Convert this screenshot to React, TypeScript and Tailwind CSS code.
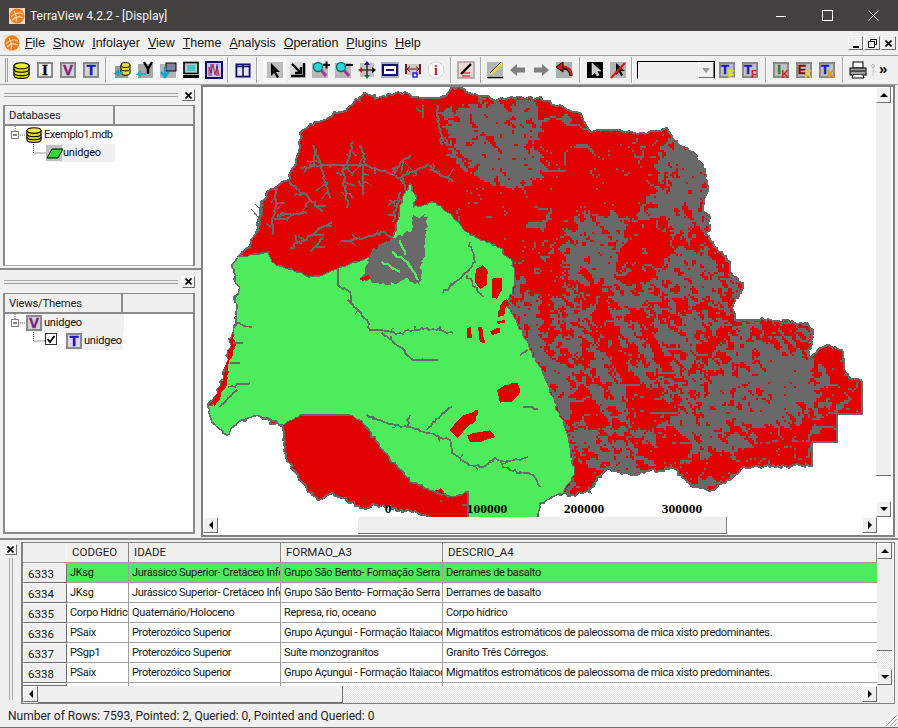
import React from "react";

type P = [number, number];
const RED = "#e00000", GREEN = "#4cec5c", GREY = "#696969";

function rnd2(x: number, y: number) {
  const s = Math.sin(x * 127.1 + y * 311.7) * 43758.5453;
  return s - Math.floor(s);
}
function vnoise(x: number, y: number) {
  const xi = Math.floor(x), yi = Math.floor(y);
  const f = x - xi, g = y - yi;
  const u = f * f * (3 - 2 * f), v = g * g * (3 - 2 * g);
  const a = rnd2(xi, yi), b = rnd2(xi + 1, yi), c = rnd2(xi, yi + 1), d = rnd2(xi + 1, yi + 1);
  return a * (1 - u) * (1 - v) + b * u * (1 - v) + c * (1 - u) * v + d * u * v;
}
function rough(pts: P[], amp = 1.6, step = 3): string {
  const out: P[] = [];
  for (let i = 0; i < pts.length; i++) {
    const a = pts[i], b = pts[(i + 1) % pts.length];
    const dx = b[0] - a[0], dy = b[1] - a[1];
    const len = Math.hypot(dx, dy);
    if (dx === 0 || dy === 0) { out.push(a); continue; }
    const n = Math.max(1, Math.round(len / step));
    for (let k = 0; k < n; k++) {
      const t = k / n;
      const x = a[0] + dx * t, y = a[1] + dy * t;
      const j = k === 0 ? 0 : 1;
      out.push([
        Math.round(x + j * (vnoise(x / 1.7, y / 1.7) - 0.5) * amp * 3),
        Math.round(y + j * (vnoise(x / 1.7 + 9, y / 1.7 + 5) - 0.5) * amp * 3),
      ]);
    }
  }
  return "M" + out.map((p) => p.join(" ")).join("L") + "Z";
}

const outline: P[] = [[232,267],[238,257],[247,248],[255,235],[263,205],[267,192],[280,184],[290,178],[296,160],[303,130],[318,122],[333,115],[348,108],[363,95],[380,97],[400,93],[420,98],[440,98],[447,95],[451,87],[470,93],[490,98],[505,100],[520,97],[537,98],[550,102],[565,108],[580,113],[590,132],[600,130],[620,130],[640,133],[667,128],[673,140],[693,152],[703,165],[708,187],[703,208],[710,218],[707,235],[717,248],[730,262],[730,272],[743,287],[733,305],[735,320],[760,320],[807,323],[813,332],[807,362],[818,350],[827,345],[842,350],[845,375],[862,382],[862,414],[837,414],[837,442],[812,442],[812,466],[743,467],[730,480],[713,490],[700,488],[687,482],[673,468],[650,470],[633,475],[620,472],[607,468],[597,480],[590,492],[573,495],[563,493],[545,500],[540,503],[537,517],[468,530],[413,512],[377,505],[360,508],[333,493],[318,500],[307,490],[287,460],[283,427],[258,415],[238,422],[227,435],[212,422],[208,407],[213,400],[223,380],[233,333],[237,307],[235,302],[240,288]];
const green: P[] = [[232,267],[238,257],[268,252],[272,262],[310,277],[323,275],[340,267],[367,258],[390,250],[402,200],[410,183],[417,198],[413,208],[433,202],[453,217],[470,235],[500,248],[513,262],[515,285],[507,305],[523,333],[547,383],[567,433],[575,473],[563,493],[540,503],[537,520],[468,520],[468,492],[453,497],[435,492],[413,483],[390,460],[363,423],[350,415],[327,415],[300,415],[283,425],[258,415],[238,422],[227,435],[212,422],[208,407],[213,405],[225,375],[233,335],[237,307],[235,302],[240,288]];
const west: P[] = [[233,332],[236,345],[229,363],[227,385],[214,406],[213,400],[223,380]];

function inPoly(x: number, y: number, poly: P[]) {
  let c = false;
  for (let i = 0, j = poly.length - 1; i < poly.length; j = i++) {
    const [xi, yi] = poly[i], [xj, yj] = poly[j];
    if (yi > y !== yj > y && x < ((xj - xi) * (y - yi)) / (yj - yi) + xi) c = !c;
  }
  return c;
}
const blobs: number[][] = [
  [485,128,40,28,0.68],[510,165,32,20,0.7],[470,150,20,18,0.62],[525,120,16,20,0.58],
  [680,172,22,38,0.66],[675,215,34,26,0.6],[690,272,26,28,0.6],[600,120,30,12,0.3],
  [605,250,40,38,0.62],[560,245,20,28,0.46],[655,350,100,95,0.53],
  [600,400,58,74,0.54],[765,385,58,42,0.66],[790,345,26,22,0.5],
  [530,335,14,40,0.66],[556,405,15,50,0.66],[520,300,12,24,0.58],[558,482,15,13,0.7],[690,425,62,32,0.6],[620,460,34,17,0.54],
  [580,320,32,38,0.52],[720,290,18,22,0.5],
];
const redBlobs: P[][] = [
  [[570,135],[600,137],[625,150],[645,185],[640,200],[610,205],[600,215],[578,205]],
  [[627,222],[665,215],[672,245],[650,280],[625,285],[612,275]],
  [[580,285],[600,285],[628,370],[640,378],[625,385],[600,345]],
  [[632,310],[640,310],[675,375],[665,378]],
  [[653,428],[672,425],[692,445],[685,458],[660,465]],
  [[567,395],[585,385],[610,425],[590,430],[575,425]],
  [[623,375],[640,380],[680,412],[645,430],[630,425]],
  [[683,465],[712,460],[713,490],[695,485]],
  [[697,352],[737,305],[735,322],[705,360]],
  [[837,413],[860,388],[862,413]],
  [[813,440],[835,418],[836,441]],
  [[818,358],[830,347],[840,352],[838,365],[825,368]],
  [[578,468],[600,466],[597,480],[588,490],[575,488]],
  [[540,180],[565,185],[566,225],[548,240],[540,230]],
  [[760,325],[800,326],[790,335],[765,335]],
];
function density(x: number, y: number) {
  let d = 0;
  for (const [cx, cy, rx, ry, a] of blobs) {
    const q = ((x - cx) / rx) ** 2 + ((y - cy) / ry) ** 2;
    if (q < 1.5) d = Math.max(d, a * Math.min(1, 1.4 - q * 0.6));
  }
  return d;
}
function greyCells() {
  let s = "";
  for (let y = 86; y < 516; y += 2) {
    let run = -1;
    for (let x = 440; x <= 866; x += 2) {
      let on = false;
      if (inPoly(x, y, outline) && !inPoly(x, y, green)) {
        let d = density(x, y);
        if (redBlobs.some((b) => inPoly(x, y, b))) d = Math.min(d, 0.24);
        if (d > 0.05) {
          const u = (x + y) / 14, v = (x - y) / 5;
          const n = 0.4 * vnoise(u, v) + 0.4 * vnoise(x / 4.2, y / 4.2) + 0.2 * vnoise(x / 1.8, y / 1.8);
          on = n < d;
        }
        const east = x > 560 || y > 270 ? 1 : x > 500 ? 0.45 : 0.25;
        const r = Math.abs(vnoise(x / 15 + 3 + vnoise(x / 9, y / 9) * 1.2, y / 15 + 7) - 0.5);
        if (r < 0.028 * east) on = true;
      }
      if (on && run < 0) run = x;
      if (!on && run >= 0) { s += `M${run} ${y}h${x - run}v2h${run - x}z`; run = -1; }
    }
  }
  return s;
}
const riversRed: P[][] = [
  [[300,168],[327,165],[367,165],[387,172],[400,178],[427,165],[453,182]],
  [[313,145],[322,170],[330,198]],[[343,165],[347,208]],[[363,165],[363,195]],[[353,142],[347,165]],
  [[360,145],[365,165]],[[410,155],[393,172]],[[400,192],[393,222]],[[290,182],[323,212]],
  [[277,215],[307,213]],[[277,188],[272,235]],[[332,222],[290,248]],[[323,238],[310,252]],
  [[437,105],[442,145]],[[423,105],[423,118]],[[400,178],[410,195]],
  [[340,242],[365,238],[385,232],[395,240]],[[262,200],[255,235]],
];
const riversGreen: P[][] = [
  [[348,300],[367,320],[370,330],[382,330],[400,333],[427,328],[453,333]],
  [[382,333],[400,347],[413,360],[438,360]],
  [[367,415],[387,423],[407,427],[427,433],[450,440],[452,453],[467,463],[483,467],[495,458],[510,470],[533,475],[540,487]],
  [[410,415],[407,427]],[[427,430],[443,413],[452,407]],[[500,463],[528,457]],
  [[237,323],[252,327]],[[233,343],[243,343]],[[230,363],[240,363]],[[228,387],[250,383]],[[220,407],[237,390]],
  [[338,268],[338,285],[350,292],[352,305]],[[443,293],[467,272],[475,262],[470,242]],[[467,275],[483,297]],
  [[523,407],[538,409]],[[520,355],[527,350]],[[363,423],[390,460],[413,483],[435,492],[453,497]],
];
function twigs(rs: P[][], every: number, maxLen: number): P[][] {
  const out: P[][] = [];
  rs.forEach((r, ri) => {
    for (let i = 0; i < r.length - 1; i++) {
      const [a, b] = [r[i], r[i + 1]];
      const len = Math.hypot(b[0] - a[0], b[1] - a[1]);
      const n = Math.floor(len / every);
      for (let k = 1; k <= n; k++) {
        const t = k / (n + 1);
        const x = a[0] + (b[0] - a[0]) * t, y = a[1] + (b[1] - a[1]) * t;
        const ang = rnd2(ri + k, i + 3) * Math.PI * 2;
        const l = 3 + rnd2(k, ri) * maxLen;
        out.push([[Math.round(x), Math.round(y)], [Math.round(x + Math.cos(ang) * l), Math.round(y + Math.sin(ang) * l)]]);
      }
    }
  });
  return out;
}
const greenSlits: P[][] = [[[392,252],[408,262],[418,280]],[[400,240],[405,255]],[[382,262],[400,272]]];
const redInGreen: P[][] = [
  [[467,328],[471,327],[472,338],[467,338]],[[478,327],[482,327],[484,338],[486,345],[480,342]],
  [[490,331],[500,328],[500,333],[492,335]],[[497,321],[505,320],[505,323],[498,324]],
  [[498,312],[504,300],[507,300],[504,316],[498,317]],
  [[476,269],[483,265],[488,272],[487,285],[480,289],[475,282]],
  [[492,279],[502,278],[502,290],[497,299],[492,298]],[[501,306],[507,298],[509,306]],
  [[497,390],[504,385],[518,383],[520,392],[512,402],[500,403]],
  [[450,430],[462,416],[478,410],[476,420],[466,428],[458,438]],
  [[467,435],[478,432],[490,430],[495,437],[480,442],[470,442]],
  [[435,490],[440,488],[445,494],[438,494]],
];
const line = (r: P[], amp = 1) => rough(r.concat([...r].reverse().slice(1, -1)), amp, 3);
const MAP = {
  grey: greyCells(),
  out: rough(outline, 1.7),
  green: rough(green, 1.2),
  west: rough(west, 0.8),
  block: rough([[373,248],[410,232],[413,215],[428,217],[425,240],[420,285],[405,278],[385,285],[360,278]], 2),
  red: riversRed.map((r) => line(r, 1.2)).join(""),
  tw: twigs(riversRed, 9, 11).map((r) => line(r, 1)).join(""),
  gr: riversGreen.map((r) => line(r, 1.2)).join(""),
  gt: twigs(riversGreen.slice(0, 3), 14, 5).map((r) => line(r, 0.8)).join(""),
  rg: redInGreen.map((b) => rough(b, 0.7)).join(""),
};

function MapArt() {
  return (
    <svg width={673} height={430} viewBox="203 87 673 430" className="block shrink-0" shapeRendering="crispEdges">
      <rect x={203} y={87} width={673} height={430} fill="#fff" />
      <path d={MAP.out} fill={RED} stroke={GREY} strokeWidth={2} />
      <path d={MAP.grey} fill={GREY} />
      <path d={MAP.red} fill="none" stroke={GREY} strokeWidth={2} />
      <path d={MAP.tw} fill="none" stroke={GREY} strokeWidth={1.4} />
      <path d={MAP.green} fill={GREEN} stroke={GREY} strokeWidth={1.2} />
      <path d={MAP.west} fill={RED} />
      <path d={MAP.block} fill={GREY} />
      {greenSlits.map((r, i) => <path key={i} d={line(r, 1)} fill="none" stroke={GREEN} strokeWidth={2.4} />)}
      <path d="M359 279l9-4 3 3-8 3z" fill={RED} />
      <path d={MAP.rg} fill={RED} />
      <path d={MAP.gr} fill="none" stroke={GREY} strokeWidth={1.5} />
      <path d={MAP.gt} fill="none" stroke={GREY} strokeWidth={1.2} />
      <g fontFamily="'Liberation Serif',serif" fontWeight={700} fontSize={13.5} fill="#000" textAnchor="middle" shapeRendering="auto">
        <text x={388} y={513}>0</text>
        <text x={487} y={513}>100000</text>
        <text x={584} y={513}>200000</text>
        <text x={682} y={513}>300000</text>
      </g>
    </svg>
  );
}

const Arrow = ({ d }: { d: "u" | "d" | "l" | "r" }) => {
  const pts = { u: "4,1 0,5 8,5", d: "0,1 8,1 4,5", l: "5,0 5,8 1,4", r: "1,0 1,8 5,4" }[d];
  const [w, h] = d === "u" || d === "d" ? [8, 6] : [6, 8];
  return <svg width={w} height={h} viewBox={`0 0 ${w} ${h}`}><polygon points={pts} fill="#000" /></svg>;
};
const bevel = "border border-t-white border-l-white border-r-[#6e6e6e] border-b-[#6e6e6e] bg-[#f0f0f0]";
const SB = ({ d, cls = "" }: { d: "u" | "d" | "l" | "r"; cls?: string }) => (
  <div className={`w-[15px] h-[16px] shrink-0 flex items-center justify-center ${bevel} ${cls}`}><Arrow d={d} /></div>
);
const XBtn = ({ cls = "" }: { cls?: string }) => (
  <div className={`w-[13px] h-[12px] flex items-center justify-center ${bevel} ${cls}`}>
    <svg width={7} height={7} viewBox="0 0 7 7"><path d="M0.5 0.5l6 6M6.5 0.5l-6 6" stroke="#000" strokeWidth={1.6} /></svg>
  </div>
);

const Logo = () => (
  <svg width={16} height={16} viewBox="0 0 16 16" className="shrink-0">
    <rect width={16} height={16} fill="#f7dcc0" />
    <circle cx={8} cy={8} r={7.5} fill="#ea7f20" />
    <path d="M2 9c3-4 8-5 12-3M3 12c3-3 7-4 11-2M5 3c2 3 3 7 2 11" stroke="#fbd9b0" strokeWidth={1.2} fill="none" />
  </svg>
);
const Db = ({ s = 16 }: { s?: number }) => (
  <svg width={s} height={s} viewBox="0 0 18 18" className="shrink-0">
    <path d="M1 4v10c0 4.5 16 4.5 16 0V4z" fill="#e0d820" stroke="#000" strokeWidth={1.2} />
    <ellipse cx={9} cy={4} rx={8} ry={3.2} fill="#f0ea40" stroke="#000" strokeWidth={1.2} />
    <path d="M1 7.5c0 4.5 16 4.5 16 0M1 11c0 4.5 16 4.5 16 0" fill="none" stroke="#000" strokeWidth={1.2} />
  </svg>
);
const Letter = ({ c, col, k, kc = "#f0a000", s = 16, bg = "#d4d4d4", serif }: { c: string; col: string; k?: string; kc?: string; s?: number; bg?: string; serif?: boolean }) => (
  <svg width={s} height={s} viewBox="0 0 16 16" className="shrink-0">
    <rect width={16} height={16} fill="#8a8a8a" />
    <rect x={2} y={2} width={12} height={12} fill={bg} />
    <text x={k ? 6 : 8} y={k ? 11.5 : 13} textAnchor="middle" fontFamily={serif ? "'Liberation Serif',serif" : "'Liberation Sans',sans-serif"} fontWeight={900} fontSize={k ? 13 : 15} fill={col} stroke={col} strokeWidth={0.4}>{c}</text>
    {k && <text x={12} y={15.5} textAnchor="middle" fontFamily="'Liberation Sans',sans-serif" fontWeight={700} fontSize={10} fill={kc}>{k}</text>}
  </svg>
);
const Ic = ({ children, w = 18, h = 18 }: { children: React.ReactNode; w?: number; h?: number }) => (
  <svg width={w} height={h} viewBox={`0 0 ${w} ${h}`} className="shrink-0">{children}</svg>
);
const Lens = ({ minus }: { minus?: boolean }) => (
  <Ic>
    <rect x={0} y={2} width={16} height={15} fill="#b8b8b8" />
    <path d="M9 9l5 6" stroke="#a03ca0" strokeWidth={3} />
    <circle cx={6} cy={6} r={4.5} fill="#29d7d7" stroke="#107070" strokeWidth={1.4} />
    <path d={minus ? "M11 4h7" : "M11 4h7M14.5 0.5v7"} stroke="#000" strokeWidth={2} />
  </Ic>
);
const Tb = ({ children, lit }: { children?: React.ReactNode; lit?: boolean }) => (
  <div className={`w-[23px] h-[24px] shrink-0 flex items-center justify-center ${lit ? "bg-[#f7f7f7]" : ""}`}>{children}</div>
);
const Sep = ({ cls }: { cls: string }) => <div className={`w-[2px] h-[26px] shrink-0 border-l border-l-[#a8a8a8] border-r border-r-white ${cls}`} />;

function Toolbar() {
  return (
    <div className="h-[30px] shrink-0 flex items-center border-y border-[#a0a0a0] bg-[#f0f0f0]">
      <div className="w-[3px] h-[24px] ml-[5px] mr-[2px] border-x border-[#a0a0a0] shrink-0" />
      <Tb><Db s={17} /></Tb>
      <Tb><Letter c="I" col="#000" bg="#f4f4f4" serif /></Tb>
      <Tb><Letter c="V" col="#7a1f7a" /></Tb>
      <Tb><Letter c="T" col="#1414c8" /></Tb>
      <Sep cls="ml-[3px] mr-[3px]" />
      <Tb lit><Ic><rect x={2} y={5} width={13} height={12} fill="#9a9a9a" /><path d="M8 4v8c0 3 9 3 9 0V4" fill="#e4dc30" stroke="#000" /><ellipse cx={12.5} cy={4} rx={4.5} ry={2.5} fill="#e4dc30" stroke="#000" /><path d="M8 8c0 2.5 9 2.5 9 0" fill="none" stroke="#000" /><path d="M10 12H3l3-3M3 12l3 3" stroke="#12a8a8" strokeWidth={2} fill="none" /></Ic></Tb>
      <Tb lit><Ic><rect x={2} y={3} width={15} height={14} fill="#a8a8a8" /><path d="M8 1l4 7 4-7M12 8v5" stroke="#000" strokeWidth={2.4} fill="none" /><path d="M10 13H2l3-3M2 13l3 3" stroke="#12b8b8" strokeWidth={2} fill="none" /></Ic></Tb>
      <Tb lit><Ic><rect x={1} y={3} width={16} height={14} fill="#b4b4b4" /><rect x={7} y={2} width={10} height={8} fill="#8080a0" stroke="#000" /><path d="M6 6v9M2 11l4 5 4-5" stroke="#10a8c8" strokeWidth={2.4} fill="none" /></Ic></Tb>
      <Tb lit><Ic><rect x={2} y={1.5} width={14} height={11} fill="#b0c8c8" stroke="#000" strokeWidth={1.6} /><rect x={5} y={4} width={8} height={6} fill="#40c8c8" /><rect x={1} y={14} width={16} height={3} fill="#000" /></Ic></Tb>
      <Tb><Ic><rect x={1} y={1} width={16} height={16} fill="#c8c8ee" stroke="#101060" strokeWidth={2} /><path d="M4 15V6l2 6 2-9 2 11 2-9 2 10" stroke="#d81818" fill="none" /><path d="M6 3v12M12 3v12" stroke="#2020c0" /></Ic></Tb>
      <Sep cls="ml-[2px] mr-[2px]" />
      <Tb><Ic><rect x={1} y={2} width={16} height={15} fill="#a8a8e0" /><rect x={2.5} y={3.5} width={13} height={12} fill="#e8e8e8" stroke="#101070" strokeWidth={1.6} /><path d="M9 3v12M2 5.5h14" stroke="#101070" strokeWidth={1.6} /></Ic></Tb>
      <Sep cls="ml-[2px] mr-[5px]" />
      <Tb lit><Ic><rect x={1} y={1} width={16} height={16} fill="#bdbdbd" /><path d="M5 2v13l3-3 3 5 2-1-3-5h4z" fill="#000" /></Ic></Tb>
      <Tb><Ic><rect x={1} y={1} width={16} height={16} fill="#d8d8d8" /><path d="M3 3l9 9M12 6v6H6" stroke="#000" strokeWidth={2.4} fill="none" /><path d="M15 2v13H2" stroke="#000" strokeWidth={2.4} fill="none" /></Ic></Tb>
      <Tb><Lens /></Tb>
      <Tb><Lens minus /></Tb>
      <Tb><Ic><rect x={2} y={2} width={14} height={14} fill="#c4c4c4" /><path d="M9 0l3 4H6z" fill="#1818b0" /><path d="M9 18l-3-4h6z" fill="#108030" /><path d="M0 9l4-3v6z" fill="#d81818" /><path d="M18 9l-4-3v6z" fill="#000" /><path d="M9 3v12M3 9h12" stroke="#333" strokeWidth={1.6} /></Ic></Tb>
      <Tb><Ic><rect x={0} y={1} width={18} height={16} fill="#a8a8c8" /><rect x={2} y={4} width={14} height={10} fill="#fff" stroke="#101070" strokeWidth={2} /><rect x={5} y={8} width={8} height={2} fill="#101070" /></Ic></Tb>
      <Tb><Ic><rect x={1} y={3} width={16} height={11} fill="#c8c8c8" /><path d="M2 3v10M16 3v10" stroke="#7a1818" strokeWidth={2} /><path d="M3 8h12M6 5.5L3 8l3 2.5M12 5.5L15 8l-3 2.5" stroke="#7a1818" fill="none" /><rect x={9} y={12} width={4} height={4} fill="none" stroke="#1818c8" strokeWidth={1.4} /></Ic></Tb>
      <Tb><Ic><circle cx={9} cy={9} r={8} fill="#fff" stroke="#d4d4d4" /><text x={9} y={14} textAnchor="middle" fontFamily="'Liberation Serif',serif" fontWeight={700} fontSize={14} fill="#c81818">i</text></Ic></Tb>
      <Sep cls="ml-[3px] mr-[2px]" />
      <Tb><Ic><rect x={1} y={1} width={16} height={16} fill="#f0d8d8" stroke="#9a9a9a" strokeWidth={1.4} /><path d="M5 12h8M5 15h8" stroke="#e04040" strokeWidth={1.6} /><path d="M14 3L4 13" stroke="#000" strokeWidth={2.4} /></Ic></Tb>
      <Sep cls="ml-[3px] mr-[1px]" />
      <Tb><Ic><rect x={1} y={1} width={16} height={14} fill="#b4b4b4" /><path d="M16 2L5 13" stroke="#e8e020" strokeWidth={2.6} /><path d="M15 1L4 12" stroke="#3030c0" /><path d="M1 16.5h16" stroke="#000" strokeWidth={1.6} /></Ic></Tb>
      <Tb><Ic><path d="M1 9l7-6v3.5h8v5H8V15z" fill="#808080" /></Ic></Tb>
      <Tb><Ic><path d="M17 9l-7-6v3.5H2v5h8V15z" fill="#808080" /></Ic></Tb>
      <Tb><Ic><rect x={1} y={1} width={16} height={16} fill="#a8b0b0" /><path d="M16 15c0-6-4-9-11-8" fill="none" stroke="#000" strokeWidth={3.4} /><path d="M16 14c0-6-4-9-10-8" fill="none" stroke="#d81818" strokeWidth={2.4} /><path d="M8 1L1 6l7 5z" fill="#d81818" stroke="#000" /></Ic></Tb>
      <Sep cls="ml-[4px] mr-[2px]" />
      <Tb><Ic><rect x={1} y={1} width={16} height={16} fill="#000" /><path d="M6 2v12l3-3 2 4 2-1-2-4h4z" fill="#c8c8c8" stroke="#fff" strokeWidth={0.5} /></Ic></Tb>
      <Tb><Ic><rect x={1} y={1} width={16} height={16} fill="#b4b4b4" /><path d="M7 2v12l3-3 2 4 2-1-2-4h4z" fill="#000" /><path d="M16 2L2 17" stroke="#e01818" strokeWidth={2.2} /></Ic></Tb>
      <Sep cls="ml-[2px] mr-[4px]" />
      <div className="w-[78px] h-[18px] shrink-0 flex bg-[#f0f0f0] border border-t-black border-l-black border-r-black border-b-[#f0f0f0] items-stretch justify-end">
        <div className={`w-[16px] flex items-center justify-center ${bevel}`}><svg width={8} height={5} viewBox="0 0 8 5"><polygon points="0,0 8,0 4,5" fill="#9a9a9a" /></svg></div>
      </div>
      <Tb><Letter c="T" col="#1414c8" k="E" kc="#e8e020" bg="#c0c0c8" /></Tb>
      <Tb><Letter c="T" col="#1414c8" k="F" kc="#e01818" bg="#c0c0c8" /></Tb>
      <Sep cls="ml-[4px] mr-[2px]" />
      <Tb><Letter c="I" col="#108030" k="K" kc="#d81818" bg="#c0c0c0" /></Tb>
      <Tb><Letter c="E" col="#7a1010" k="K" kc="#f0d020" bg="#c0c0c0" /></Tb>
      <Tb><Letter c="T" col="#1414c8" k="K" kc="#f09000" bg="#c0c0c0" /></Tb>
      <Sep cls="ml-[4px] mr-[2px]" />
      <Tb><Ic><rect x={4} y={1} width={10} height={6} fill="#fff" stroke="#000" /><rect x={1} y={7} width={16} height={7} fill="#a0a0a0" stroke="#000" /><path d="M2 10h14" stroke="#000" /><path d="M4 14l-1 3h12l-1-3" fill="#fff" stroke="#000" /></Ic></Tb>
      <div className="w-[7px] shrink-0 flex justify-center"><svg width={4} height={12} viewBox="0 0 4 12"><circle cx={2} cy={2} r={1.5} fill="none" stroke="#b8b8b8" /><path d="M2 4v8" stroke="#c8c8c8" /></svg></div>
      <div className="ml-[3px] text-[15px] leading-none font-bold pb-[3px] text-black">»</div>
    </div>
  );
}

const Menu = ({ t, u }: { t: string; u: number }) => (
  <span className="text-[12.45px] text-[#111]">
    {t.slice(0, u)}<span className="underline">{t[u]}</span>{t.slice(u + 1)}
  </span>
);

const Grip = () => (
  <div className="flex-1 h-[4px] ml-[4px] mr-[4px] border-y border-[#a0a0a0] border-t-[#a8a8a8]" />
);
function Expander() {
  return (
    <svg width={15} height={18} viewBox="0 0 15 18" className="shrink-0">
      <path d="M4 0v5M9 9h6" stroke="#555" strokeDasharray="1 1" />
      <rect x={0.5} y={5.5} width={7} height={7} fill="#fff" stroke="#808080" />
      <path d="M2 9h4" stroke="#000" />
    </svg>
  );
}
const Conn = ({ w }: { w: number }) => (
  <svg width={w} height={18} viewBox={`0 0 ${w} 18`} className="shrink-0">
    <path d={`M0.5 0v9H${w}`} fill="none" stroke="#333" strokeDasharray="1 1" />
  </svg>
);
const Head = ({ t, w }: { t: string; w: number }) => (
  <div className="h-[20px] flex shrink-0 bg-[#f0f0f0] border-b-2 border-b-[#8a8a8a]">
    <div className="border-r-2 border-r-[#8a8a8a] pl-[4px] text-[11.25px] tracking-[-0.2px] leading-[19px] text-[#222] shrink-0" style={{ width: w }}>{t}</div>
    <div className="flex-1" />
  </div>
);

const cols = ["w-[62px]", "w-[152px]", "w-[162px]", "flex-1"];
const rows = [
  ["6333", "JKsg", "Jurássico Superior- Cretáceo Inferior", "Grupo São Bento- Formação Serra Geral", "Derrames de basalto"],
  ["6334", "JKsg", "Jurássico Superior- Cretáceo Inferior", "Grupo São Bento- Formação Serra Geral", "Derrames de basalto"],
  ["6335", "Corpo Hídrico", "Quaternário/Holoceno", "Represa, rio, oceano", "Corpo hídrico"],
  ["6336", "PSaix", "Proterozóico Superior", "Grupo Açungui - Formação Itaiacoca", "Migmatitos estromáticos de paleossoma de mica xisto predominantes."],
  ["6337", "PSgp1", "Proterozóico Superior", "Suíte monzogranitos", "Granito Três Córregos."],
  ["6338", "PSaix", "Proterozóico Superior", "Grupo Açungui - Formação Itaiacoca", "Migmatitos estromáticos de paleossoma de mica xisto predominantes."],
];
const check = "bg-[repeating-conic-gradient(#ffffff_0_25%,#e4e4e4_0_50%)] [background-size:2px_2px]";

export default function App() {
  return (
    <div className="w-[898px] h-[728px] flex flex-col overflow-hidden bg-[#f0f0f0] font-['Liberation_Sans',sans-serif] text-[#111]">
      <div className="h-[31px] shrink-0 flex items-center bg-[#43423f] text-white pl-[9px] pr-[2px]">
        <Logo />
        <div className="ml-[5px] text-[12px] font-['Roboto',sans-serif] text-[#f2f2f2] flex-1">TerraView 4.2.2 - [Display]</div>
        <div className="w-[46px] flex justify-center"><svg width={10} height={10} viewBox="0 0 10 10"><path d="M0 5.5h10" stroke="#fff" /></svg></div>
        <div className="w-[46px] flex justify-center"><svg width={11} height={11} viewBox="0 0 11 11"><rect x={0.5} y={0.5} width={10} height={10} fill="none" stroke="#fff" /></svg></div>
        <div className="w-[46px] flex justify-center"><svg width={11} height={11} viewBox="0 0 11 11"><path d="M0.5 0.5l10 10M10.5 0.5l-10 10" stroke="#fff" /></svg></div>
      </div>

      <div className="h-[24px] shrink-0 flex items-center pl-[4px] pr-[2px]">
        <Logo />
        <div className="flex-1 flex ml-[5px] gap-[8px]">
          <Menu t="File" u={0} /><Menu t="Show" u={0} /><Menu t="Infolayer" u={0} /><Menu t="View" u={0} /><Menu t="Theme" u={0} /><Menu t="Analysis" u={0} /><Menu t="Operation" u={0} /><Menu t="Plugins" u={0} /><Menu t="Help" u={0} />
        </div>
        <div className="flex gap-[1px]">
          <div className={`w-[15px] h-[14px] flex items-end justify-center pb-[1px] ${bevel}`}><div className="w-[6px] h-[2px] bg-black" /></div>
          <div className={`w-[16px] h-[14px] flex items-center justify-center ${bevel}`}><svg width={9} height={9} viewBox="0 0 9 9"><path d="M2.5 2.5v-2h6v5h-2M0.5 2.5h6v6h-6z" fill="none" stroke="#000" /></svg></div>
          <XBtn cls="!w-[15px] !h-[14px]" />
        </div>
      </div>

      <Toolbar />

      <div className="h-[452px] shrink-0 flex font-['Roboto',sans-serif]">
        <div className="w-[201px] shrink-0 flex flex-col">
          <div className="h-[185px] shrink-0 flex flex-col border-b-2 border-b-[#8a8a8a]">
            <div className="h-[20px] shrink-0 flex items-center pr-[6px]"><Grip /><XBtn /></div>
            <div className="h-[161px] shrink-0 ml-[3px] w-[192px] border-l-2 border-t border-r-2 border-[#8a8a8a] border-b border-b-[#b0b0b0] bg-white flex flex-col">
              <Head t="Databases" w={110} />
              <div className="flex items-center h-[18px] pl-[6px]">
                <Expander />
                <Db s={16} />
                <span className="ml-[2px] text-[11px] tracking-[-0.4px]">Exemplo1.mdb</span>
              </div>
              <div className="flex items-center h-[18px] pl-[28px]">
                <Conn w={13} />
                <div className="flex items-center bg-[#f0f0f0] h-[18px] w-[69px]">
                  <svg width={17} height={16} viewBox="0 0 17 16" className="shrink-0"><rect width={16} height={16} y={0} fill="#c0c0c0" /><path d="M1 13L6 4h11l-5 9z" fill="#30d830" stroke="#000" /></svg>
                  <span className="text-[11px] tracking-[-0.2px]">unidgeo</span>
                </div>
              </div>
            </div>
          </div>
          <div className="h-[265px] shrink-0 flex flex-col">
            <div className="h-[23px] shrink-0 flex items-center pr-[6px]"><Grip /><XBtn /></div>
            <div className="h-[241px] shrink-0 ml-[3px] w-[192px] border-l-2 border-t border-r-2 border-b-2 border-[#8a8a8a] bg-white flex flex-col">
              <Head t="Views/Themes" w={118} />
              <div className="flex items-center h-[18px] pl-[6px]">
                <Expander />
                <div className="flex items-center bg-[#f0f0f0] h-[18px] w-[98px]">
                  <Letter c="V" col="#7a1f7a" />
                  <span className="ml-[2px] text-[11px] tracking-[-0.2px]">unidgeo</span>
                </div>
              </div>
              <div className="flex items-center h-[18px] pl-[28px]">
                <Conn w={12} />
                <svg width={12} height={12} viewBox="0 0 12 12" className="shrink-0 mb-[4px]"><rect x={0.5} y={0.5} width={11} height={11} fill="#fff" stroke="#333" /><path d="M2.5 6l2.5 3L9.5 3" fill="none" stroke="#000" strokeWidth={1.8} /></svg>
                <div className="ml-[9px] flex items-center bg-[#f0f0f0] h-[18px] w-[57px]">
                  <Letter c="T" col="#1414c8" bg="#d8d8e8" />
                  <span className="ml-[2px] text-[11px] tracking-[-0.2px]">unidgeo</span>
                </div>
              </div>
            </div>
          </div>
        </div>

        <div className="w-[694px] shrink-0 border-2 border-[#808080] flex flex-col bg-white">
          <div className="h-[430px] shrink-0 flex">
            <MapArt />
            <div className="w-[16px] shrink-0 flex flex-col bg-white">
              <SB d="u" cls="!h-[16px]" />
              <div className="h-[373px] w-[15px] bg-[#efefef] border-b border-b-[#6e6e6e]" />
              <div className="flex-1" />
              <SB d="d" />
            </div>
          </div>
          <div className="h-[17px] shrink-0 flex bg-white">
            <SB d="l" />
            <div className="w-[140px]" />
            <div className="w-[369px] bg-[#efefef] border-r border-b border-[#6e6e6e] border-r-[#808080]" />
            <div className="flex-1" />
            <SB d="r" cls="mr-[16px]" />
          </div>
        </div>
      </div>

      <div className="h-[167px] shrink-0 flex border-t-2 border-t-[#8a8a8a] mt-[1px] font-['Roboto',sans-serif]">
        <div className="w-[21px] shrink-0 flex flex-col items-center pt-[4px]">
          <XBtn cls="!w-[12px] !h-[11px]" />
          <div className="mt-[3px] w-[4px] h-[142px] border-x border-[#a8a8a8]" />
        </div>
        <div className="w-[874px] h-[162px] mt-[2px] shrink-0 border border-[#808080] border-l-2 bg-white flex text-[11px] tracking-[-0.33px]">
          <div className="w-[854px] shrink-0 flex flex-col">
            <div className="h-[20px] shrink-0 flex bg-[#f0f0f0] border-b border-b-[#9a9a9a] text-[11.5px] tracking-normal leading-[19px] text-[#222]">
              <div className="w-[44px] border-r border-r-[#f8f8f8]" />
              {["CODGEO", "IDADE", "FORMAO_A3", "DESCRIO_A4"].map((h, i) => (
                <div key={h} className={`${cols[i]} pl-[5px] border-r border-r-[#8a8a8a]`}>{h}</div>
              ))}
            </div>
            <div className="h-[123px] overflow-hidden flex flex-col">
              {rows.map((r, ri) => (
                <div key={r[0]} className="h-[20px] shrink-0 flex leading-[20px] text-[#161616]">
                  <div className={`w-[44px] pl-[4px] text-[11.5px] tracking-normal shrink-0 ${bevel} !border-t-[#fafafa]`}>{r[0]}</div>
                  {r.slice(1).map((c, i) => (
                    <div key={i} className={`${cols[i]} shrink-0 pl-[3px] overflow-hidden whitespace-nowrap border-b border-b-[#a0a0a0] ${i < 3 ? "border-r border-r-[#a0a0a0]" : ""} ${ri === 0 ? "bg-[#4cec5c] border-b-[#3fc44d] border-r-[#3fc44d]" : ""}`}>{c}</div>
                  ))}
                </div>
              ))}
              <div className="h-[3px] shrink-0 flex">
                <div className={`w-[44px] shrink-0 ${bevel}`} />
                <div className="w-[62px] border-r border-r-[#a0a0a0]" />
                <div className="w-[152px] border-r border-r-[#a0a0a0]" />
                <div className="w-[162px] border-r border-r-[#a0a0a0]" />
              </div>
            </div>
            <div className={`flex-1 flex ${check}`}>
              <SB d="l" />
              <div className="w-[305px] bg-[#f0f0f0] border-r border-b border-[#6e6e6e]" />
              <div className="flex-1" />
              <SB d="r" />
            </div>
          </div>
          <div className="w-[16px] shrink-0 flex flex-col bg-[#f0f0f0]">
            <SB d="u" />
            <div className="h-[92px] w-[15px] bg-[#efefef] border-b border-b-[#6e6e6e]" />
            <div className={`h-[18px] w-[15px] ${check}`} />
            <SB d="d" />
          </div>
        </div>
      </div>

      <div className="flex-1 flex items-center pl-[8px] text-[12px] text-[#222] border-b border-b-[#707070] relative font-['Roboto',sans-serif]">
        Number of Rows: 7593, Pointed: 2, Queried: 0, Pointed and Queried: 0
        <svg width={13} height={13} viewBox="0 0 13 13" className="absolute right-0 bottom-0"><path d="M12 1L1 12M12 5L5 12M12 9l-3 3" stroke="#a0a0a0" /></svg>
      </div>
    </div>
  );
}
